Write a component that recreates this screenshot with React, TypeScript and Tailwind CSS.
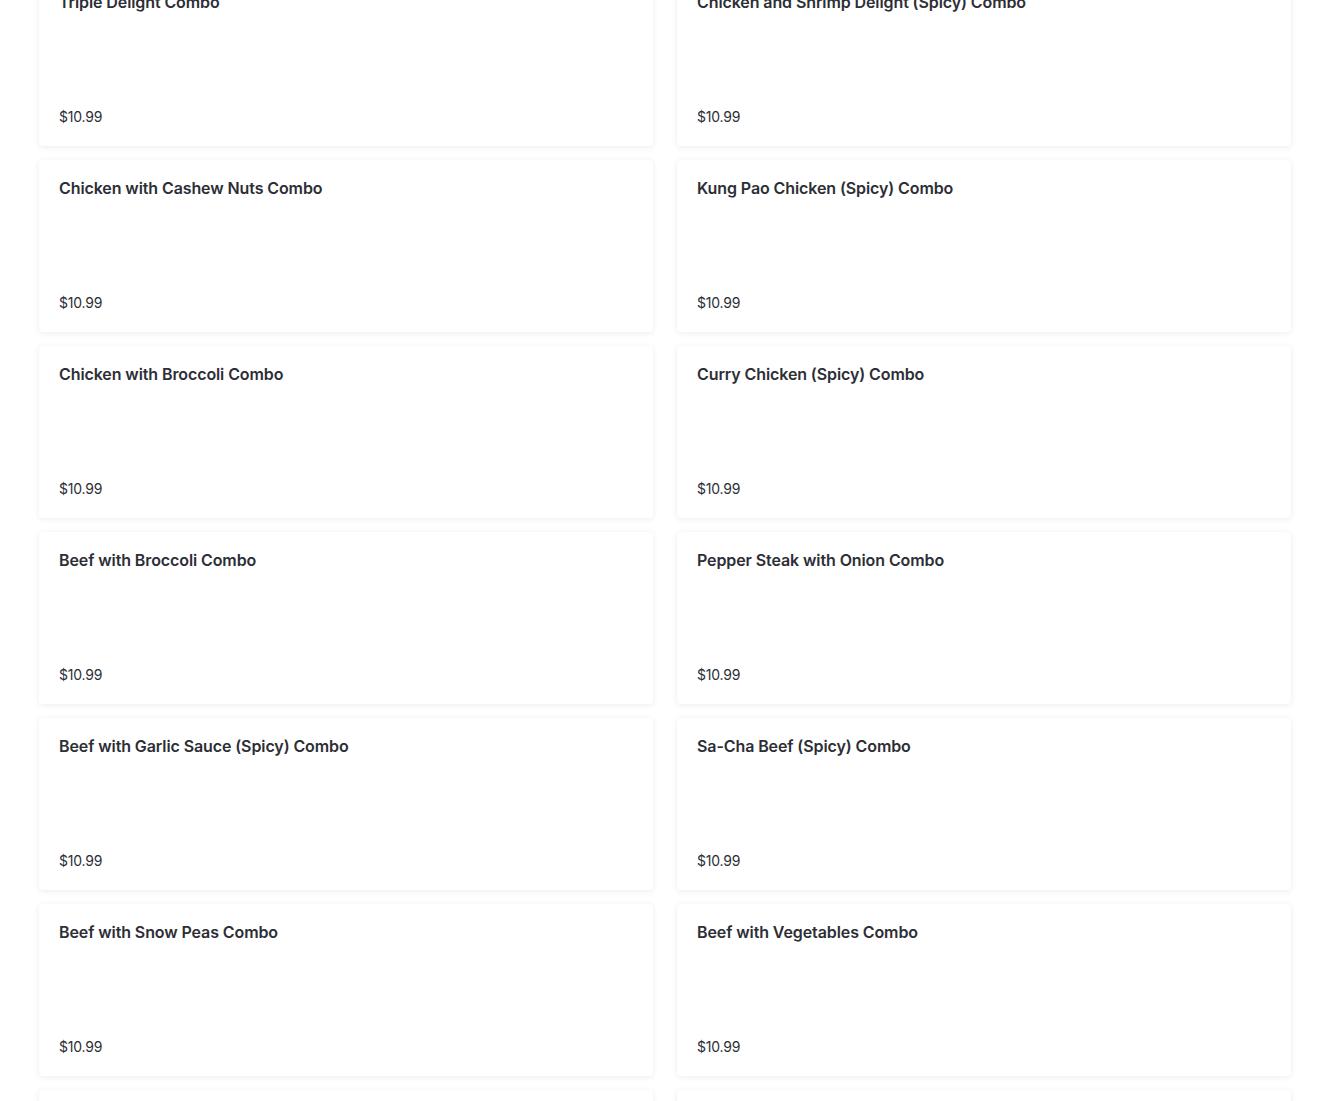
const items: [string, string][] = [
  ["Triple Delight Combo", "Chicken and Shrimp Delight (Spicy) Combo"],
  ["Chicken with Cashew Nuts Combo", "Kung Pao Chicken (Spicy) Combo"],
  ["Chicken with Broccoli Combo", "Curry Chicken (Spicy) Combo"],
  ["Beef with Broccoli Combo", "Pepper Steak with Onion Combo"],
  ["Beef with Garlic Sauce (Spicy) Combo", "Sa-Cha Beef (Spicy) Combo"],
  ["Beef with Snow Peas Combo", "Beef with Vegetables Combo"],
  ["Beef with Mixed Vegetables Combo", "Shrimp with Broccoli Combo"],
];

const MenuCard = ({ name }: { name: string }) => (
  <div className="h-[172px] rounded-[4px] bg-white px-5 pt-[18px] pb-[20px] flex flex-col justify-between shadow-[0_1px_6px_rgba(0,0,0,0.08)]">
    <div className="text-[16px] leading-[20px] font-semibold tracking-[-0.1px] text-[#2d2e36]">{name}</div>
    <div className="text-[14px] leading-[18px] text-[#2d2e36] tracking-[-0.2px]">$10.99</div>
  </div>
);

export default function App() {
  return (
    <div className="h-[1101px] overflow-hidden bg-white" style={{ fontFamily: "Inter, 'Noto Sans', sans-serif" }}>
      <div className="-mt-[26px] grid grid-cols-2 gap-x-6 gap-y-[14px] px-[39px]">
        {items.flat().map((n) => (
          <MenuCard key={n} name={n} />
        ))}
      </div>
    </div>
  );
}
